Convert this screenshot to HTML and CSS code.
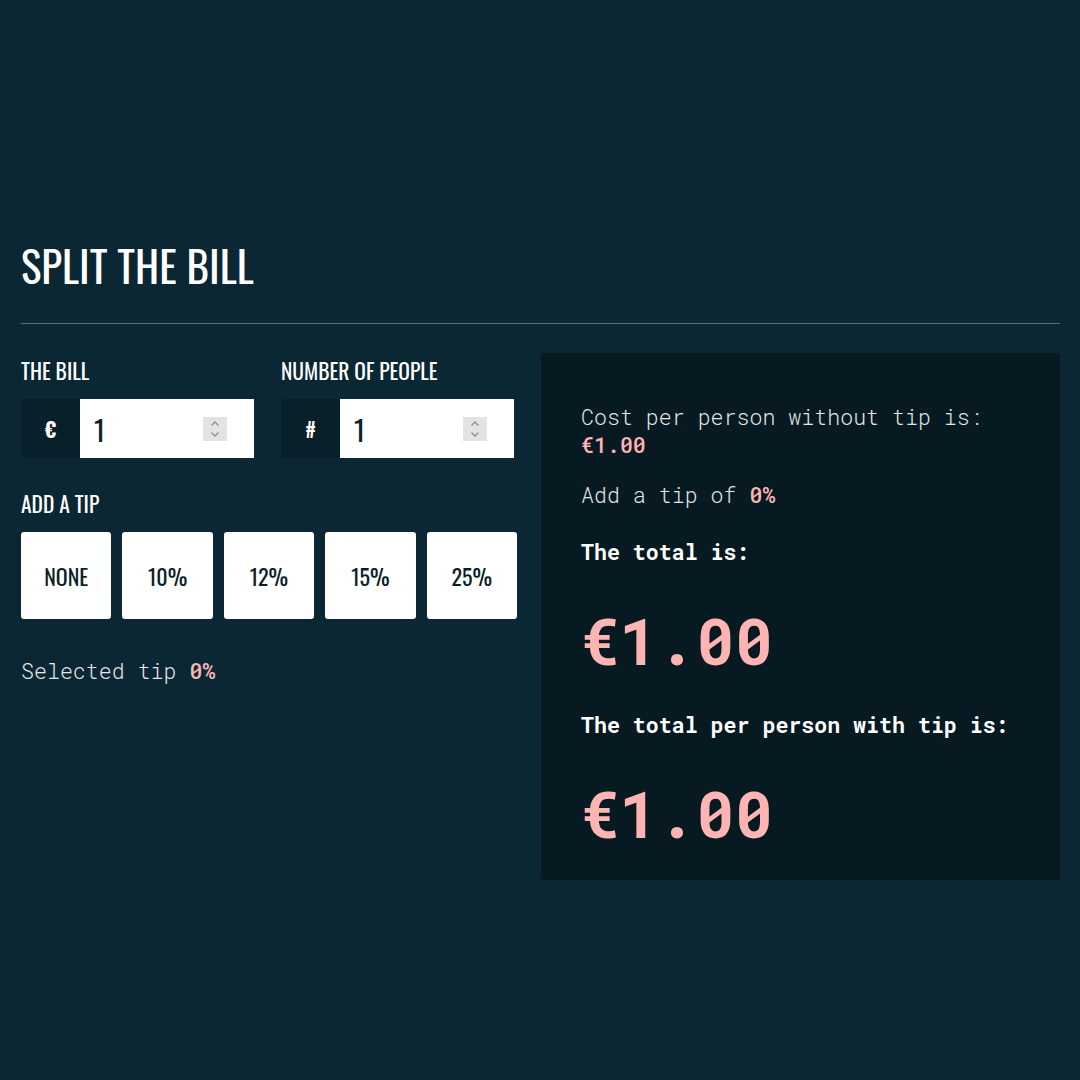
FILE: index.html
```html
<!DOCTYPE html>
<html lang="en">
<head>
  <meta charset="UTF-8">
  <meta name="viewport" content="width=device-width, initial-scale=1.0">
  <title>Split the bill</title>
  <link rel="stylesheet" href="styles.css">
</head>
<body>
  <main class="splitter">
    <h1>Split the bill</h1>
    <hr>
    <div class="layout">
      <form class="inputs" id="form">
        <div class="fields">
          <div class="field">
            <label class="label" for="bill">The bill</label>
            <div class="group">
              <span class="prefix">€</span>
              <div class="box">
                <input type="text" id="bill" name="bill" value="1">
                <span class="spin"></span>
              </div>
            </div>
          </div>
          <div class="field">
            <label class="label" for="people">Number of people</label>
            <div class="group">
              <span class="prefix">#</span>
              <div class="box">
                <input type="text" id="people" name="people" value="1">
                <span class="spin"></span>
              </div>
            </div>
          </div>
        </div>

        <span class="label">Add a tip</span>
        <div class="tips">
          <button type="button" data-tip="0">None</button>
          <button type="button" data-tip="10">10%</button>
          <button type="button" data-tip="12">12%</button>
          <button type="button" data-tip="15">15%</button>
          <button type="button" data-tip="25">25%</button>
        </div>

        <p class="mono">Selected tip <b class="hl">0%</b></p>
      </form>

      <section class="result">
        <p class="mono">Cost per person without tip is: <b class="hl">€1.00</b></p>
        <p class="mono">Add a tip of <b class="hl">0%</b></p>
        <p class="mono strong">The total is:</p>
        <p class="big">€1.00</p>
        <p class="mono strong">The total per person with tip is:</p>
        <p class="big">€1.00</p>
      </section>
    </div>
  </main>
</body>
</html>
```

FILE: styles.css
```css
* {
  box-sizing: border-box;
}

body {
  margin: 0;
  min-height: 100vh;
  background: #0b2733;
  color: #fff;
  font-family: "Oswald", "Liberation Sans Narrow", "DejaVu Sans Condensed", sans-serif;
}

.splitter {
  padding: 239px 20px 0 21px;

  h1 {
    margin: 0;
    font-size: 43px;
    line-height: 52px;
    font-weight: 400;
    text-transform: uppercase;
  }

  hr {
    margin: 32px 0 29px;
    border: 0;
    border-top: 1px solid #5e6d73;
  }
}

.layout {
  display: grid;
  grid-template-columns: 496px 1fr;
  gap: 24px;
  align-items: start;
}

.label {
  display: block;
  font-size: 21.5px;
  line-height: 26px;
  text-transform: uppercase;
  margin: 4px 0 16px;
}

.fields {
  display: flex;
  gap: 27px;
  margin-bottom: 32px;

  .field {
    width: 233px;
    flex: none;
  }
}

.group {
  display: flex;
  height: 59px;

  .prefix {
    flex: none;
    width: 59px;
    display: flex;
    align-items: center;
    justify-content: center;
    background: #08202a;
    font-size: 20px;
    font-weight: 700;
  }

  .box {
    flex: 1;
    min-width: 0;
    display: flex;
    align-items: center;
    background: #fff;
    padding: 0 27px 0 14px;
  }

  input {
    flex: 1;
    width: 0;
    min-width: 0;
    border: 0;
    outline: 0;
    padding: 0;
    background: transparent;
    font-family: inherit;
    font-size: 29px;
    color: #0b1f28;
  }

  .spin {
    flex: none;
    width: 24px;
    height: 24px;
    background:
      url("data:image/svg+xml,%3Csvg xmlns='http://www.w3.org/2000/svg' width='24' height='24'%3E%3Cpath d='M8.5 8.5l3.5-3.5 3.5 3.5M8.5 15.5l3.5 3.5 3.5-3.5' fill='none' stroke='%23909090' stroke-width='1.4'/%3E%3C/svg%3E") center no-repeat,
      #e3e3e3;
  }
}

.tips {
  display: grid;
  grid-template-columns: repeat(5, 1fr);
  gap: 11px;

  button {
    height: 87px;
    border: 0;
    border-radius: 3px;
    background: #fff;
    color: #0b1f28;
    font-family: inherit;
    font-size: 22px;
    font-weight: 400;
    text-transform: uppercase;
    cursor: pointer;
  }
}

.mono {
  font-family: "Roboto Mono", "DejaVu Sans Mono", monospace;
  font-size: 1.35rem;
  font-weight: 300;
  line-height: 28px;
  color: #e4e7e8;
  margin: 0;
}

.hl {
  color: #ffb4b4;
  font-weight: 500;
}

.inputs > .mono {
  margin-top: 38px;
}

.result {
  background: #071a22;
  border-radius: 3px;
  padding: 50px 40px 29px;

  .mono + .mono {
    margin-top: 22px;
  }

  .strong {
    font-weight: 700;
    color: #fff;
    margin-top: 29px !important;
  }

  .big {
    margin: 36px 0 33px;
    font-family: "Roboto Mono", "DejaVu Sans Mono", monospace;
    font-size: 64px;
    line-height: 76px;
    font-weight: 700;
    color: #ffb4b4;
  }

  .big:last-child {
    margin: 36px 0 0;
  }
}
```
